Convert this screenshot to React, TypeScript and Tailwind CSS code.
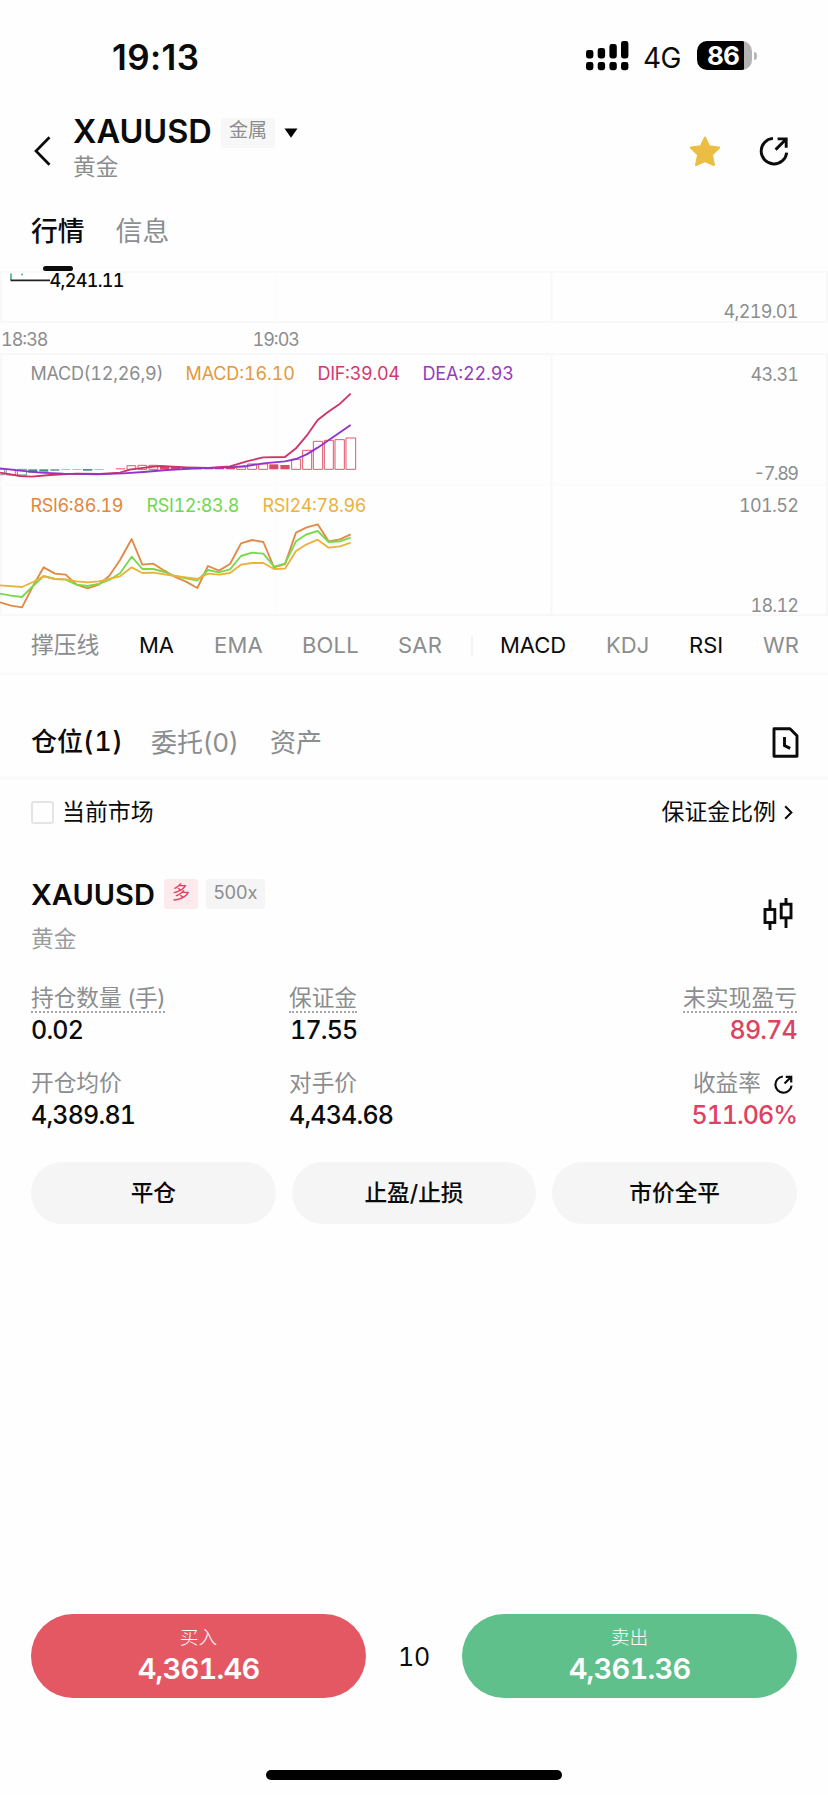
import React from "react";

type LabelProps = {
  x: number;
  y: number;
  w?: number;
  color?: string;
  anchor?: "start" | "end";
  weight?: number;
  children: string;
};

function ChartLabel({ x, y, w, color = "#8b8d8e", anchor = "start", weight = 400, children }: LabelProps) {
  return (
    <text x={x} y={y} fill={color} textAnchor={anchor} fontSize="18" fontWeight={weight} textLength={w}>
      {children}
    </text>
  );
}

function ShareIcon({ size, stroke = 2.9 }: { size: number; stroke?: number }) {
  return (
    <svg width={size} height={size} viewBox="0 0 30 30" fill="none" stroke="#0b0b0b" strokeWidth={stroke}>
      <path d="M14 2.4A12.8 12.8 0 1 0 27.7 16.6" />
      <path d="M16.6 13.6 27 3.2M18.6 2.9h8.6v8.8" />
    </svg>
  );
}

function SignalIcon() {
  const bars = [
    [0, 9, 8.5],
    [11.7, 7, 10.5],
    [23.4, 3, 14.5],
    [35, 0, 17.5],
  ];
  return (
    <svg width="43" height="30" viewBox="0 0 43 30">
      {bars.map(([x, y, h]) => (
        <g key={x}>
          <rect x={x} y={y} width="7.4" height={h} rx="2.4" />
          <rect x={x} y="21" width="7.4" height="8.2" rx="2.4" />
        </g>
      ))}
    </svg>
  );
}

const macdBars: [number, number, number, number, string, boolean][] = [
  [-12, 628, 26, 16, "#7f8fb0", false],
  [19, 628, 27, 17, "#7f8fb0", false],
  [52, 628, 27, 17, "#6f8fa5", false],
  [85, 628, 27, 10, "#3f8f86", true],
  [118, 628, 27, 7, "#3f8f86", true],
  [151, 628, 27, 4, "#3f8f86", true],
  [184, 628, 27, 2, "#6fb39f", true],
  [217, 628, 27, 2, "#6fb39f", true],
  [249, 627, 28, 5, "#3f8f86", true],
  [283, 628, 28, 2, "#6fb39f", true],
  [348, 625, 27, 3, "#e0566c", true],
  [381, 617, 26, 11, "#e0566c", false],
  [414, 616, 26, 12, "#e0566c", false],
  [447, 616, 26, 12, "#e0566c", false],
  [480, 619, 28, 9, "#dd4a63", true],
  [513, 620, 27, 8, "#dd4a63", true],
  [546, 623, 27, 5, "#dd4a63", true],
  [579, 625, 27, 3, "#dd4a63", true],
  [612, 625, 27, 3, "#dd4a63", true],
  [645, 624, 27, 4, "#dd4a63", true],
  [678, 624, 27, 4, "#dd4a63", true],
  [710, 621, 27, 7, "#e0566c", false],
  [743, 612, 27, 16, "#e0566c", false],
  [776, 612, 27, 16, "#e0566c", false],
  [808, 613, 27, 15, "#dd4a63", true],
  [841, 615, 28, 13, "#dd4a63", true],
  [875, 598, 27, 30, "#e0566c", false],
  [908, 571, 27, 57, "#e0566c", false],
  [940, 544, 28, 84, "#e0566c", false],
  [973, 541, 27, 87, "#e0566c", false],
  [1005, 539, 28, 89, "#e0566c", false],
  [1038, 534, 29, 94, "#e0566c", false],
];

const DIF =
  "0,638 60,648 95,650 150,645 230,641 300,642 360,638 390,629 440,622 480,618 560,622 625,624 690,619 740,604 790,592 855,591 888,565 920,527 953,480 985,455 1020,431 1052,401";
const DEA =
  "0,625 60,632 120,638 190,641 290,643 370,640 430,636 500,630 590,625 690,622 740,618 790,610 855,604 888,597 920,583 953,563 1052,495";
const RSI6 =
  "0,367 33,377 66,382 99,318 131,262 165,281 197,284 230,314 263,325 296,314 328,287 360,240 395,177 427,254 460,251 493,272 525,291 558,305 592,324 624,258 657,272 690,252 723,190 756,180 790,186 822,262 855,252 888,158 920,142 953,133 986,184 1020,178 1052,163";
const RSI12 =
  "0,341 33,347 66,351 99,318 131,288 165,297 197,299 230,314 263,318 296,312 328,300 360,280 395,230 427,267 460,267 493,276 525,288 558,295 592,302 624,270 657,277 690,268 723,228 756,218 790,221 822,260 855,251 888,184 920,163 953,153 986,186 1020,184 1052,173";
const RSI24 =
  "0,316 66,321 99,306 131,289 165,297 197,298 230,304 263,307 296,304 360,289 395,262 427,279 460,278 525,288 592,297 624,281 657,284 690,279 723,254 756,249 790,249 822,267 855,266 888,213 920,193 953,179 986,203 1020,199 1052,188";

function Chart() {
  return (
    <svg width="828" height="345" viewBox="0 271 828 345" className="block shrink-0 tabular-nums">
      <g stroke="#f8f8f9" strokeWidth="2" fill="none">
        <path d="M0 271.8H828M0 322H828M0 354H828M0 615H828" />
        <path d="M551.5 272V322M551.5 354V615M827 272V322M827 354V615M1 272V322M1 354V615" />
      </g>
      <path d="M276 272V322M276 354V615M0 484.5H828" stroke="#fbfbfc" strokeWidth="1.5" />

      <path d="M11 273.5V280" stroke="#4aa58a" strokeWidth="1.6" />
      <circle cx="22" cy="274.5" r="0.9" fill="#4aa58a" />
      <path d="M10.5 280.3H50" stroke="#222" strokeWidth="1.7" />
      <ChartLabel x={49.5} y={287} w={75} color="#0b0b0b" weight={500}>4,241.11</ChartLabel>
      <ChartLabel x={798.5} y={318} w={75} anchor="end">4,219.01</ChartLabel>
      <ChartLabel x={1} y={345.7} w={47.5}>18:38</ChartLabel>
      <ChartLabel x={252.5} y={345.7} w={47.5}>19:03</ChartLabel>

      <ChartLabel x={30.5} y={380.4} w={133}>MACD(12,26,9)</ChartLabel>
      <ChartLabel x={185.5} y={380.4} w={109.5} color="#e29a3f">MACD:16.10</ChartLabel>
      <ChartLabel x={317.5} y={380.4} w={82.5} color="#cf3a6d">DIF:39.04</ChartLabel>
      <ChartLabel x={422.5} y={380.4} w={91.5} color="#963bbd">DEA:22.93</ChartLabel>
      <ChartLabel x={799} y={381.2} w={48.5} anchor="end">43.31</ChartLabel>
      <ChartLabel x={799} y={480.2} w={45.5} anchor="end">-7.89</ChartLabel>

      <ChartLabel x={30.5} y={511.5} w={93} color="#e0873f">RSI6:86.19</ChartLabel>
      <ChartLabel x={146.5} y={511.5} w={93} color="#70d84f">RSI12:83.8</ChartLabel>
      <ChartLabel x={262.5} y={511.5} w={104} color="#eab23c">RSI24:78.96</ChartLabel>
      <ChartLabel x={799} y={512.2} w={60} anchor="end">101.52</ChartLabel>
      <ChartLabel x={799} y={611.5} w={48.5} anchor="end">18.12</ChartLabel>

      <g transform="translate(0 260) scale(0.33333)" fill="none" strokeLinejoin="round">
        {macdBars.map(([x, y, w, h, c, filled]) => (
          <rect key={x} x={x} y={y} width={w} height={h} fill={filled ? c : "#fff"} stroke={filled ? "none" : c} strokeWidth="3" />
        ))}
        <polyline points={DIF} stroke="#cf3464" strokeWidth="5.6" />
        <polyline points={DEA} stroke="#8f35cc" strokeWidth="5.6" />
      </g>
      <g transform="translate(0 480) scale(0.33333)" fill="none" strokeLinejoin="round">
        <polyline points={RSI6} stroke="#e08a45" strokeWidth="5.6" />
        <polyline points={RSI12} stroke="#78d94a" strokeWidth="5.6" />
        <polyline points={RSI24} stroke="#ecb13c" strokeWidth="5.6" />
      </g>
    </svg>
  );
}

function Indicator({ label, active, className }: { label: string; active?: boolean; className: string }) {
  return <span className={`shrink-0 whitespace-nowrap ${active ? "text-[#0b0b0b]" : "text-[#8b8d8e]"} ${className}`}>{label}</span>;
}

export default function App() {
  return (
    <div className="flex h-[1795px] w-[828px] flex-col overflow-hidden bg-[#fefefe] font-['Inter','Noto_Sans_CJK_SC',sans-serif] text-[#0b0b0b]">
      <div className="flex h-[114px] shrink-0 items-center pl-[112px]">
        <span className="w-[474px] text-[35px] leading-10 font-semibold tracking-[0.4px]">19:13</span>
        <div className="-mt-[3px]"><SignalIcon /></div>
        <span className="ml-[14px] w-[54px] pt-px text-[28px] leading-8 tracking-[-0.5px]">4G</span>
        <div className="-mt-[3px] flex items-center">
          <div className="flex h-[29px] w-[55px] items-center overflow-hidden rounded-[10px] bg-[linear-gradient(to_right,#000_47px,#b3b3b3_47px)] pl-[10px]">
            <span className="text-[26px] leading-none font-bold tracking-[-0.8px] text-white">86</span>
          </div>
          <div className="ml-[2px] h-[8px] w-[3px] rounded-r-full bg-[#b8b8b8]" />
        </div>
      </div>

      <div className="flex h-[74px] shrink-0 items-center pr-[39px] pl-[34px]">
        <svg width="17" height="30" viewBox="0 0 17 30" fill="none" stroke="#0b0b0b" strokeWidth="2.7">
          <path d="M15.5 1.2 2 15 15.5 28.8" />
        </svg>
        <div className="ml-[22px] self-start">
          <div className="flex h-[37px] items-center">
            <span className="w-[148px] text-[32.5px] font-semibold">XAUUSD</span>
            <span className="flex h-[30px] w-[54px] items-center justify-center rounded-[3px] bg-[#f7f7f8] pb-[2px] text-[19px] text-[#8b8d8e]">金属</span>
            <svg className="ml-[9px]" width="14" height="10" viewBox="0 0 14 10"><path d="M.5.5h13L7 9.8z" /></svg>
          </div>
          <div className="text-[22.7px] leading-8 text-[#8b8d8e]">黄金</div>
        </div>
        <svg className="ml-auto" width="32" height="31" viewBox="0 0 32 31">
          <path d="M16 1.6 20.2 10.4 30 11.6 22.8 18.6 24.9 29 16 25 7.1 29 9.2 18.6 2 11.6 11.8 10.4Z" fill="#ebbe43" stroke="#ebbe43" strokeWidth="2.2" strokeLinejoin="round" />
        </svg>
        <div className="ml-[38px]"><ShareIcon size={30} /></div>
      </div>

      <div className="flex h-[83px] shrink-0 gap-[31px] pt-[26px] pl-[31px] text-[26.8px] leading-[35px]">
        <div className="flex flex-col items-center">
          <span className="font-medium">行情</span>
          <div className="mt-[17px] h-[5px] w-[30px] rounded-full bg-[#0b0b0b]" />
        </div>
        <span className="text-[#8b8d8e]">信息</span>
      </div>

      <Chart />

      <div className="flex h-[59px] shrink-0 items-center border-b-2 border-[#fafafa] pt-[2px] pl-[31px] text-[22px]">
        <Indicator label="撑压线" className="w-[108px] text-[22.8px]" />
        <Indicator label="MA" active className="w-[75px]" />
        <Indicator label="EMA" className="w-[88px] tracking-[0.2px]" />
        <Indicator label="BOLL" className="w-[96px] tracking-[0.2px]" />
        <Indicator label="SAR" className="w-[73px] tracking-[0.2px]" />
        <div className="h-[22px] w-[2px] bg-[#f5f5f5]" />
        <Indicator label="MACD" active className="ml-[27px] w-[106px]" />
        <Indicator label="KDJ" className="w-[83px]" />
        <Indicator label="RSI" active className="w-[74px]" />
        <Indicator label="WR" className="" />
      </div>

      <div className="mt-[31px] flex h-[74px] shrink-0 items-center border-b-4 border-[#fafafa] pt-[3px] pr-[29px] pl-[31px] text-[26px]">
        <span className="w-[120px] font-medium">仓位<span className="text-[27px] tracking-[0.6px] tabular-nums">(1)</span></span>
        <span className="w-[119px] text-[#8b8d8e]">委托(0)</span>
        <span className="text-[#8b8d8e]">资产</span>
        <svg className="ml-auto" width="27" height="31" viewBox="0 0 27 31" fill="none" stroke="#0b0b0b" strokeWidth="2.9">
          <path d="M2 1.8H18L25 8.8V29.2H2Z" strokeLinejoin="round" />
          <path d="M12.5 10V18.5L18.2 21.4" />
        </svg>
      </div>

      <div className="flex h-[64px] shrink-0 items-center pr-[35px] pl-[31px] text-[22.9px]">
        <div className="h-[23px] w-[23px] rounded-[3px] border-2 border-[#e4e4e4]" />
        <span className="ml-[8px]">当前市场</span>
        <span className="ml-auto">保证金比例</span>
        <svg className="ml-[8px]" width="9" height="15" viewBox="0 0 9 15" fill="none" stroke="#0b0b0b" strokeWidth="2"><path d="M1.2 1.2 7.4 7.5 1.2 13.8" /></svg>
      </div>

      <div className="mt-[35px] flex h-[75px] shrink-0 justify-between pr-[35px] pl-[31px]">
        <div>
          <div className="flex h-[30px] items-center">
            <span className="w-[133px] pt-px text-[29px] font-semibold">XAUUSD</span>
            <span className="flex h-[30px] w-[34px] items-center justify-center rounded-[3px] bg-[#fceaec] pb-[4px] text-[18px] text-[#dc4262]">多</span>
            <span className="ml-[8px] flex h-[30px] w-[59px] items-center justify-center rounded-[3px] bg-[#f5f5f6] pb-[3px] text-[18.3px] text-[#8b8d8e]">500x</span>
          </div>
          <div className="mt-[15px] text-[22.7px] leading-[30px] text-[#9a9c9d]">黄金</div>
        </div>
        <svg className="mt-[18px]" width="30" height="33" viewBox="0 0 30 33" fill="none" stroke="#0b0b0b" strokeWidth="2.9">
          <rect x="2" y="12.5" width="9.8" height="13" />
          <path d="M7 2.5V12M7 26V33M23 1V7M23 21V31" />
          <rect x="18.2" y="7.2" width="9.8" height="13.6" />
        </svg>
      </div>

      <div className="mt-[31px] grid shrink-0 grid-cols-[258px_1fr_auto] gap-y-[23px] pr-[31px] pl-[31px] text-[25px] leading-[34px] font-medium tracking-[-0.8px] tabular-nums">
        <div>
          <div className="flex h-[28px]"><span className="border-b-2 border-dotted border-[#a4a6a7] text-[22.7px] leading-[26px] font-normal tracking-normal text-[#8b8d8e]">持仓数量<span className="tracking-[-0.8px]"> (手)</span></span></div>
          <div>0.02</div>
        </div>
        <div>
          <div className="flex h-[28px]"><span className="border-b-2 border-dotted border-[#a4a6a7] text-[22.7px] leading-[26px] font-normal tracking-normal text-[#8b8d8e]">保证金</span></div>
          <div className="pl-px">17.55</div>
        </div>
        <div className="text-right">
          <div className="flex h-[28px] justify-end"><span className="border-b-2 border-dotted border-[#a4a6a7] text-[22.8px] leading-[26px] font-normal tracking-normal text-[#8b8d8e]">未实现盈亏</span></div>
          <div className="text-[#dc4262]">89.74</div>
        </div>
        <div>
          <div className="h-[28px] text-[22.7px] leading-[25px] font-normal tracking-normal text-[#8b8d8e]">开仓均价</div>
          <div>4,389.81</div>
        </div>
        <div>
          <div className="h-[28px] text-[22.7px] leading-[25px] font-normal tracking-normal text-[#8b8d8e]">对手价</div>
          <div>4,434.68</div>
        </div>
        <div className="text-right">
          <div className="flex h-[28px] items-center justify-end pr-[4px] text-[22.7px] leading-[25px] font-normal tracking-normal text-[#8b8d8e]">
            <span className="mr-[13px] self-start">收益率</span>
            <ShareIcon size={19} stroke={3.4} />
          </div>
          <div className="tracking-[-1px] text-[#dc4262]">511.06%</div>
        </div>
      </div>

      <div className="mt-[30px] grid h-[62px] shrink-0 grid-cols-3 gap-[16px] px-[31px] text-[22.7px] font-medium">
        <button className="rounded-full bg-[#f5f5f5]">平仓</button>
        <button className="rounded-full bg-[#f5f5f5]">止盈/止损</button>
        <button className="rounded-full bg-[#f5f5f5]">市价全平</button>
      </div>

      <div className="mt-auto flex h-[84px] shrink-0 items-center px-[31px] tabular-nums">
        <button className="flex h-full w-[335px] flex-col items-center rounded-full bg-[#e45864] pt-[11px] text-white">
          <span className="text-[18.7px] leading-[26px] font-light">买入</span>
          <span className="text-[29px] leading-9 font-semibold tracking-[-0.8px]">4,361.46</span>
        </button>
        <span className="flex-1 pt-[3px] text-center text-[25px] tracking-[-0.3px]">10</span>
        <button className="flex h-full w-[335px] flex-col items-center rounded-full bg-[#5fc08c] pt-[11px] text-white">
          <span className="text-[18.7px] leading-[26px] font-light">卖出</span>
          <span className="text-[29px] leading-9 font-semibold tracking-[-0.8px]">4,361.36</span>
        </button>
      </div>
      <div className="mx-auto mt-[72px] mb-[15px] h-[10px] w-[296px] shrink-0 rounded-full bg-black" />
    </div>
  );
}
